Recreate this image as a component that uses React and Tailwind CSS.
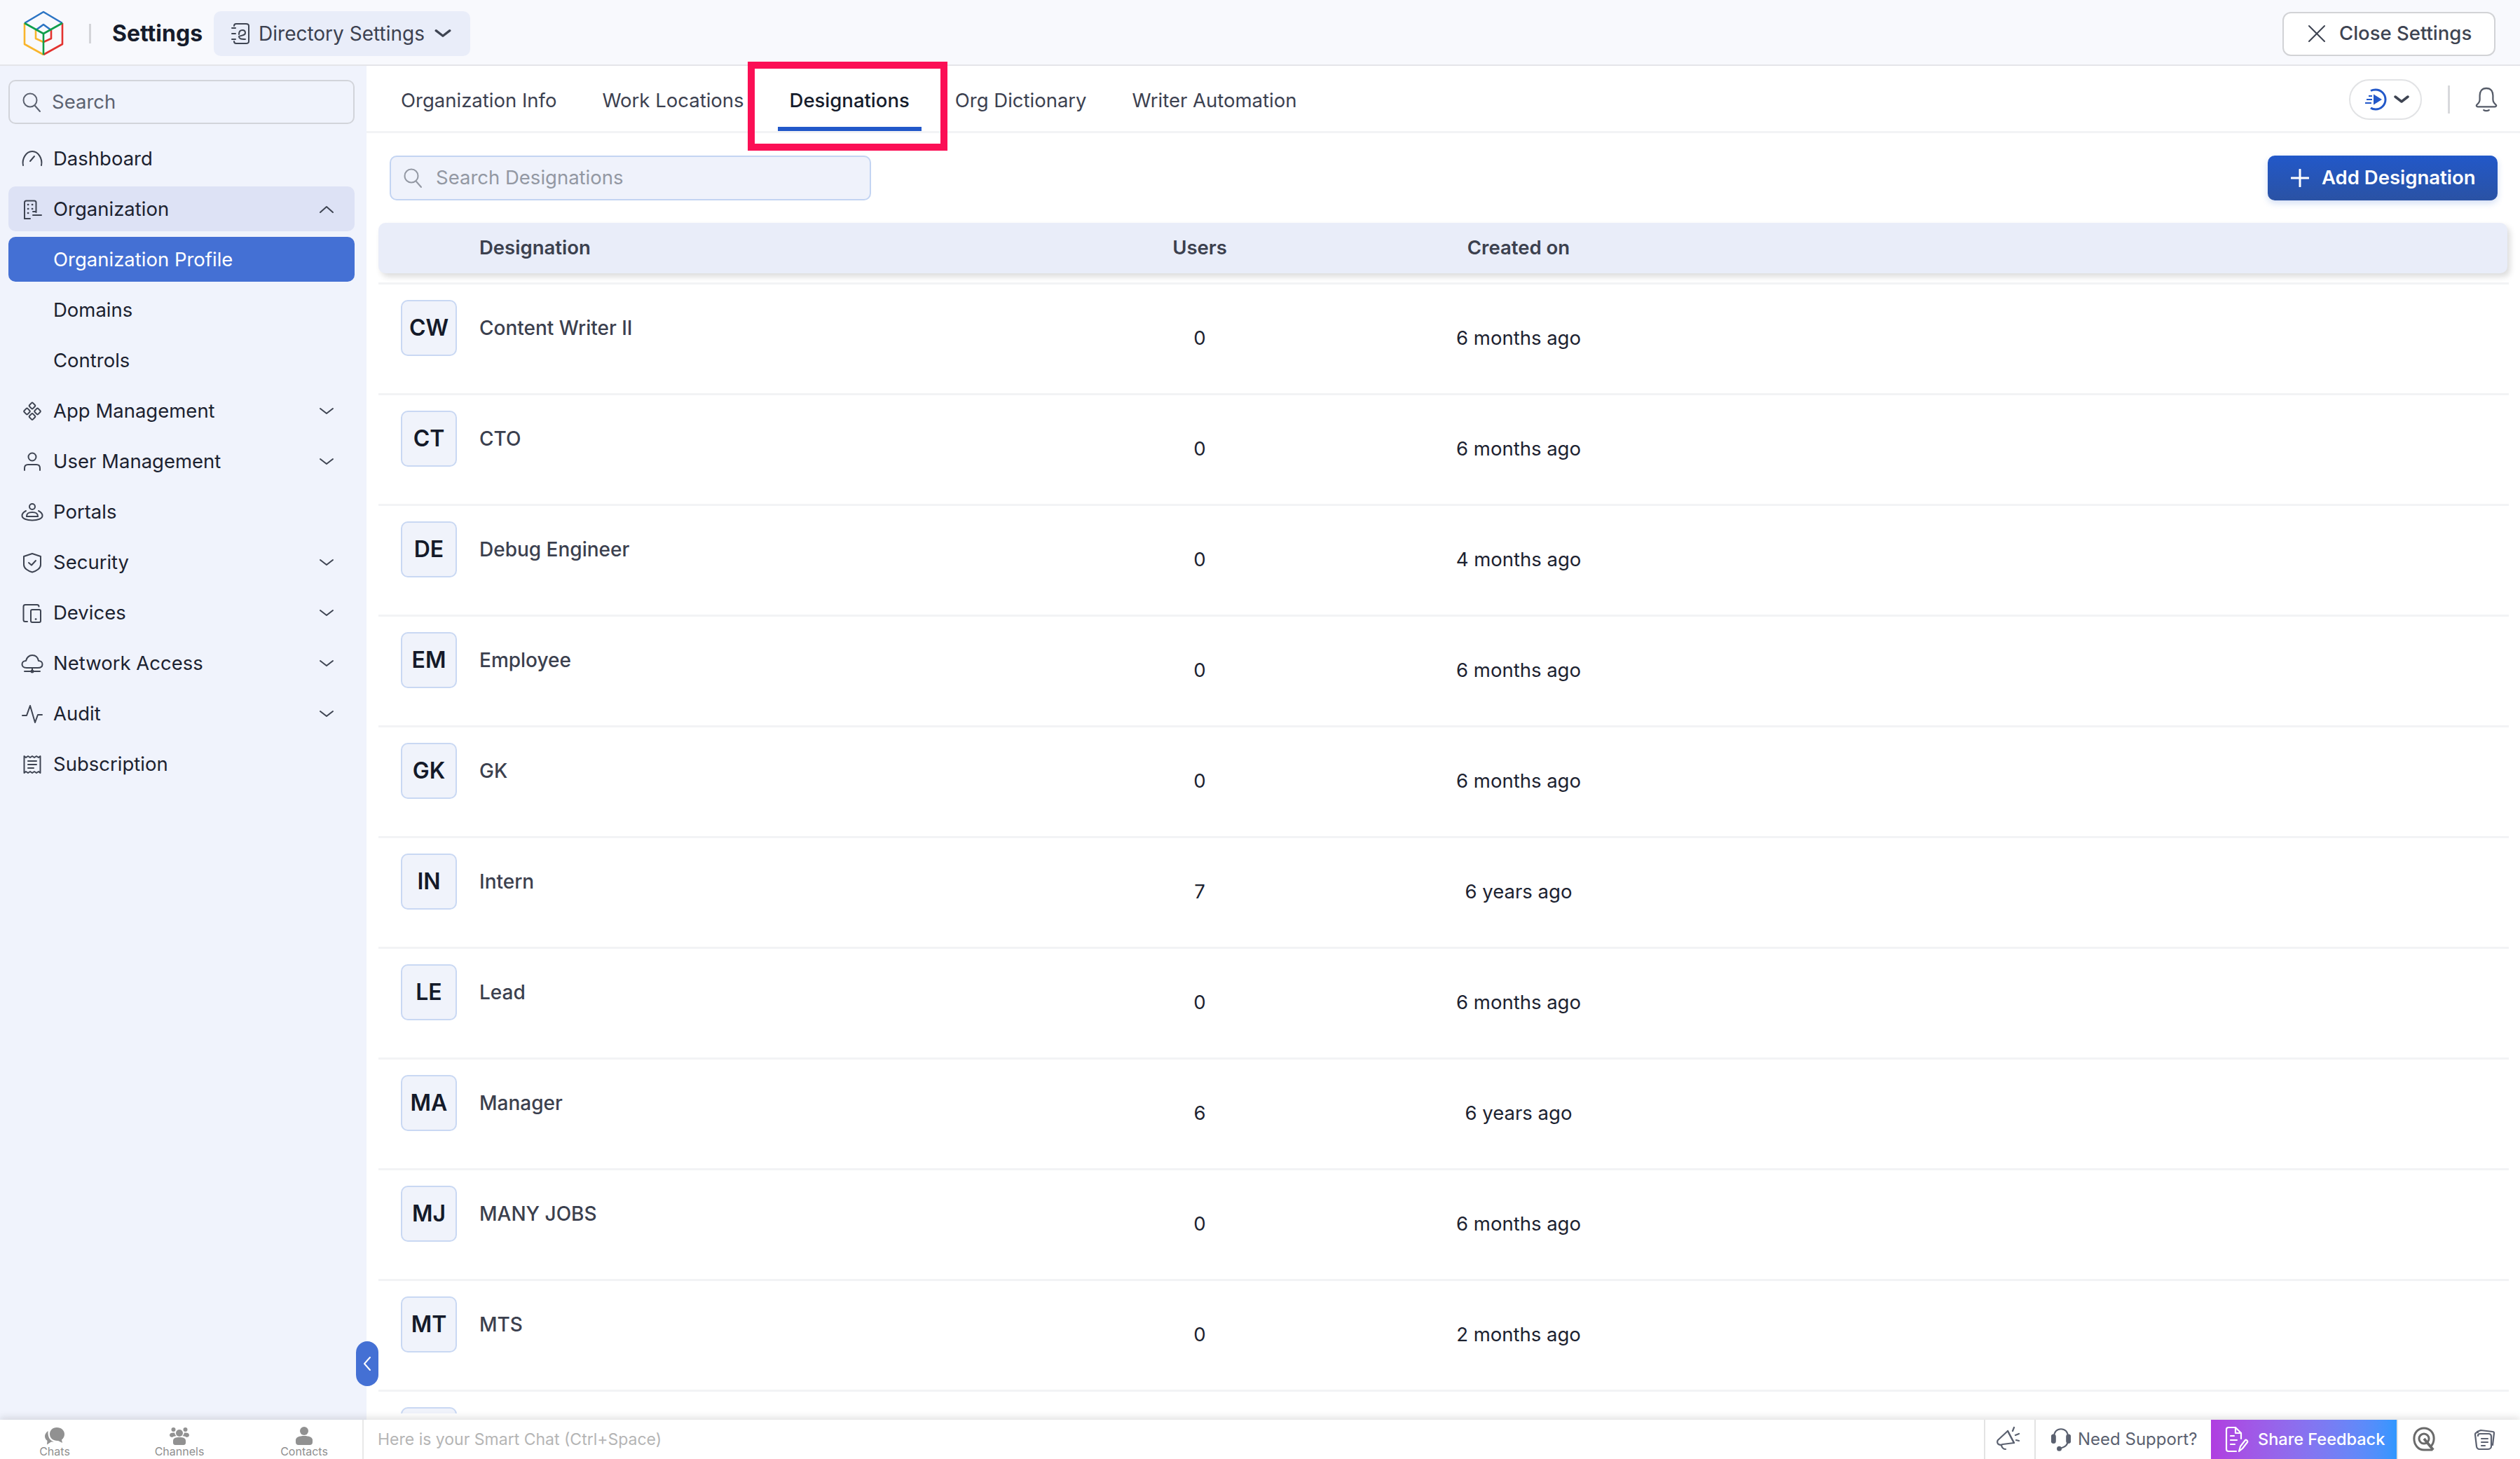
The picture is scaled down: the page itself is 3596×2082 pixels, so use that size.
import React from "react";

const Logo = () => (
  <svg viewBox="32 14 60 68" className="w-[60px] h-[68px]" fill="none" strokeWidth="2.6" strokeLinejoin="round">
    <path d="M35 33V63L62 78" stroke="#f9b52c" />
    <path d="M51 43V55L62 60" stroke="#f9b52c" />
    <path d="M89 33V63L62 78" stroke="#e3322f" />
    <path d="M73 43V55L62 60" stroke="#e3322f" />
    <path d="M35 33L62 17L89 33" stroke="#2b74c4" />
    <path d="M51 43L62 35L73 43" stroke="#2b74c4" />
    <path d="M35 33L62 48L89 33M62 48V78" stroke="#0e9e4a" />
  </svg>
);

const Stroke = ({ children, className = "w-[32px] h-[32px]", color = "#3e4452", sw = 2, box = "0 0 32 32" }) => (
  <svg viewBox={box} className={className} fill="none" stroke={color} strokeWidth={sw} strokeLinecap="round" strokeLinejoin="round">
    {children}
  </svg>
);

const SearchIcon = ({ color = "#5c6270" }) => (
  <Stroke color={color} className="w-[30px] h-[30px]" box="0 0 30 30">
    <circle cx="13" cy="12" r="9.5" />
    <path d="M20 20L27 28" />
  </Stroke>
);

const Chevron = ({ up, className = "w-[22px] h-[22px]", sw = 2 }) => (
  <Stroke className={className} box="0 0 22 22" sw={sw}>
    <path d={up ? "M2 15L11 7L20 15" : "M2 7L11 14L20 7"} />
  </Stroke>
);

const icons = {
  dashboard: (
    <>
      <path d="M3 25C1 16 7 5 16 5C25 5 31 16 29 25" />
      <path d="M13 19L19 12" />
    </>
  ),
  organization: (
    <>
      <path d="M5 29V6C5 4.5 6 3.5 7.5 3.5H19C20.5 3.5 21.5 4.5 21.5 6V20" />
      <path d="M5 29H13M17 24H29M17 19H21" />
      <path d="M10 9H10.2M16 9H16.2M10 15H10.2M16 15H16.2M10 21H10.2" strokeWidth="2.6" />
    </>
  ),
  app: (
    <>
      <rect x="12.5" y="4.5" width="7" height="7" rx="1.5" transform="rotate(45 16 8)" />
      <rect x="5" y="12.5" width="7" height="7" rx="1.5" transform="rotate(45 8.5 16)" />
      <rect x="20" y="12.5" width="7" height="7" rx="1.5" transform="rotate(45 23.5 16)" />
      <rect x="12.5" y="20" width="7" height="7" rx="1.5" transform="rotate(45 16 23.5)" />
    </>
  ),
  user: (
    <>
      <circle cx="16" cy="9" r="5.5" />
      <path d="M5 28V25C5 22 7 20 10 20H22C25 20 27 22 27 25V28" />
    </>
  ),
  portals: (
    <>
      <circle cx="16" cy="8" r="4" />
      <path d="M8 22C8 17 11 16 16 16C21 16 24 17 24 22" />
      <path d="M7 14C3 16 1.5 18 1.5 21C1.5 25 8 27.5 16 27.5C24 27.5 30.5 25 30.5 21C30.5 18 29 16 25 14" />
      <path d="M8 22H24" />
    </>
  ),
  security: (
    <>
      <path d="M16 3L28 7V19C28 24 22 28 16 29.5C10 28 4 24 4 19V7L16 3Z" />
      <path d="M11 16L15 19.5L21 13" />
    </>
  ),
  devices: (
    <>
      <path d="M9 28H6C4.5 28 3.5 27 3.5 25.5V6.5C3.5 5 4.5 4 6 4H23C24.5 4 25.5 5 25.5 6.5" />
      <rect x="14" y="11" width="14" height="18" rx="2" />
      <path d="M21 24.5H21.2" strokeWidth="2.6" />
    </>
  ),
  network: (
    <>
      <path d="M8 22C3 22 1.5 19 1.5 17C1.5 14 4 12 7 12C8 7 12 4 16 4C21 4 24 7 25 12C28 12 30.5 14 30.5 17C30.5 20 28 22 24 22H8Z" />
      <path d="M16 22V27M5 27H27" />
      <circle cx="16" cy="27" r="1.5" />
    </>
  ),
  audit: <path d="M2 18H8L13 4L20 28L24 17H30" />,
  subscription: (
    <>
      <path d="M4.5 4L7 6L10 4L13 6L16 4L19 6L22 4L25 6L27.5 4V28L25 26L22 28L19 26L16 28L13 26L10 28L7 26L4.5 28V4Z" />
      <path d="M10 11H22M10 16H22M10 21H18" />
    </>
  ),
};

const navItems = [
  { label: "Dashboard", icon: "dashboard" },
  { label: "Organization", icon: "organization", open: true, active: true },
  { label: "Organization Profile", selected: true },
  { label: "Domains" },
  { label: "Controls" },
  { label: "App Management", icon: "app", arrow: true },
  { label: "User Management", icon: "user", arrow: true },
  { label: "Portals", icon: "portals" },
  { label: "Security", icon: "security", arrow: true },
  { label: "Devices", icon: "devices", arrow: true },
  { label: "Network Access", icon: "network", arrow: true },
  { label: "Audit", icon: "audit", arrow: true },
  { label: "Subscription", icon: "subscription" },
];

const NavRow = ({ item }) => {
  let rowClass = "text-[#1c2230]";
  if (item.active) rowClass = "bg-[#dde2f5] text-[#1c2230]";
  if (item.selected) rowClass = "bg-[#4470d4] text-white";

  return (
    <div className={`h-[64px] rounded-[10px] flex items-center pl-[18px] pr-[29px] pt-[1px] text-[27.5px] ${rowClass}`}>
      <div className="w-[32px] h-[32px] shrink-0">{item.icon && <Stroke>{icons[item.icon]}</Stroke>}</div>
      <span className="ml-[14px]">{item.label}</span>
      {(item.arrow || item.open) && (
        <div className="ml-auto">
          <Chevron up={item.open} />
        </div>
      )}
    </div>
  );
};

const tabs = ["Organization Info", "Work Locations", "Designations", "Org Dictionary", "Writer Automation"];

const rows = [
  { short: "CW", name: "Content Writer II", users: 0, created: "6 months ago" },
  { short: "CT", name: "CTO", users: 0, created: "6 months ago" },
  { short: "DE", name: "Debug Engineer", users: 0, created: "4 months ago" },
  { short: "EM", name: "Employee", users: 0, created: "6 months ago" },
  { short: "GK", name: "GK", users: 0, created: "6 months ago" },
  { short: "IN", name: "Intern", users: 7, created: "6 years ago" },
  { short: "LE", name: "Lead", users: 0, created: "6 months ago" },
  { short: "MA", name: "Manager", users: 6, created: "6 years ago" },
  { short: "MJ", name: "MANY JOBS", users: 0, created: "6 months ago" },
  { short: "MT", name: "MTS", users: 0, created: "2 months ago" },
  { short: "", name: "", users: "", created: "" }, // cut off by the bottom bar
];

const Row = ({ row }) => (
  <div className="h-[158px] shrink-0 border-t-[3px] border-[#f2f3f5] flex items-center pb-[1px]">
    <div className="w-[1022px] self-start flex items-center pl-[32px] pt-[22px]">
      <div className="w-[80px] h-[80px] rounded-[10px] border-2 border-[#c9d8f3] bg-[#f0f3fb] flex items-center justify-center text-[32px] font-semibold text-[#141a29]">
        {row.short}
      </div>
      <span className="ml-[32px] text-[28px] font-medium text-[#3b404e]">{row.name}</span>
    </div>
    <div className="w-[300px] text-center text-[27.5px] text-[#1c2230]">{row.users}</div>
    <div className="w-[610px] text-center text-[27.5px] text-[#1c2230]">{row.created}</div>
  </div>
);

const ChatsIcon = () => (
  <svg viewBox="0 0 30 26" className="w-[30px] h-[26px]" fill="#919191">
    <path d="M18 1C24.5 1 29 5.2 29 10.5C29 14 27.5 16.5 25 18.5L26 23L20 20C13.5 20.5 8 16.5 8 10.5C8 5.2 12 1 18 1Z" />
    <path d="M5.5 6C3 8 1 10.5 1 13.5C1 16.5 2.5 18.5 4.5 20L4 25.5L10 21.5L14 21.5C9 20 5 16 5.5 6Z" />
  </svg>
);

const ChannelsIcon = () => (
  <svg viewBox="0 0 28 26" className="w-[28px] h-[26px]" fill="#919191">
    <circle cx="14" cy="9" r="5" />
    <circle cx="5.5" cy="4" r="3" />
    <circle cx="22.5" cy="4" r="3" />
    <path d="M0 12C0 9 3 8 7 8.5C7.5 11 8.5 12 9.5 13C7 13.5 5 14 4 15C2 15 0 14 0 12Z" />
    <path d="M28 12C28 9 25 8 21 8.5C20.5 11 19.5 12 18.5 13C21 13.5 23 14 24 15C26 15 28 14 28 12Z" />
    <path d="M5 20C5 16 9 15 14 15C19 15 23 16 23 20V23C23 25 21.5 26 20 26H8C6.5 26 5 25 5 23V20Z" />
  </svg>
);

const ContactsIcon = () => (
  <svg viewBox="0 0 24 26" className="w-[24px] h-[26px]" fill="#919191">
    <circle cx="12" cy="6" r="6" />
    <path d="M0 19C0 15 5 13 12 13C19 13 24 15 24 19V22C24 24.5 22.5 26 20 26H4C1.5 26 0 24.5 0 22V19Z" />
  </svg>
);

export default function App() {
  return (
    <div className="relative w-[3596px] h-[2082px] overflow-hidden flex flex-col bg-white font-[Inter,sans-serif]">
      {/* top bar */}
      <div className="h-[94px] shrink-0 bg-[#f8f9fd] border-b-2 border-[#e4e5e9] flex items-center pl-[32px] pr-[35px] pt-[4px]">
        <Logo />
        <div className="w-[3px] h-[28px] ml-[35px] bg-[#d4d5d9]" />
        <span className="ml-[30px] text-[32px] font-bold text-[#161c2b]">Settings</span>
        <div className="ml-[16px] w-[366px] h-[64px] rounded-[10px] bg-[#e9edf9] flex items-center pl-[24px] text-[28px] text-[#3c4150]">
          <Stroke className="w-[28px] h-[32px]" box="0 0 28 32">
            <path d="M5 5C5 3 6 2 8 2H22C24 2 26 3 26 5V27C26 29 24 30 22 30H8C6 30 5 29 5 27" />
            <path d="M2 8H7M2 16H7M2 24H7" />
            <path d="M12 17C12 13 14 11 17 11C20 11 21 13 21 15C21 18 18 18 12 20C12 23 14 24 21 24" />
          </Stroke>
          <span className="ml-[12px]">Directory Settings</span>
          <div className="ml-[14px]">
            <Chevron className="w-[24px] h-[24px]" sw={3} />
          </div>
        </div>
        <div className="ml-auto w-[304px] h-[63px] rounded-[12px] bg-white border-2 border-[#d2d3d6] flex items-center pl-[34px] text-[27.5px] font-medium text-[#3e4452]">
          <Stroke className="w-[26px] h-[26px]" box="0 0 26 26">
            <path d="M2 2L24 24M24 2L2 24" />
          </Stroke>
          <span className="ml-[19px]">Close Settings</span>
        </div>
      </div>

      <div className="flex-1 flex min-h-0">
        {/* sidebar */}
        <div className="w-[523px] shrink-0 bg-[#f0f3fc] pl-[12px] pr-[17px] pt-[20px]">
          <div className="h-[63px] rounded-[10px] border-2 border-[#d2d4da] flex items-center pl-[16px] text-[27.5px] text-[#5c6270]">
            <SearchIcon />
            <span className="ml-[14px]">Search</span>
          </div>
          <div className="mt-[17px] flex flex-col gap-[8px]">
            {navItems.map((item) => (
              <NavRow key={item.label} item={item} />
            ))}
          </div>
        </div>

        {/* main */}
        <div className="flex-1 min-w-0 flex flex-col pb-[9px]">
          <div className="h-[96px] shrink-0 border-b-[3px] border-[#f2f3f5] flex items-center pl-[49px] pr-[32px] text-[27.5px] text-[#3c4150]">
            <div className="flex gap-[65px] pt-[6px]">
              {tabs.map((tab) =>
                tab === "Designations" ? (
                  <div key={tab} className="relative font-medium text-[#161c2b]">
                    {tab}
                    <div className="absolute -left-[17px] -right-[17px] top-[58px] h-[6px] bg-[#2258c9]" />
                  </div>
                ) : (
                  <div key={tab}>{tab}</div>
                )
              )}
            </div>
            <div className="ml-auto flex items-center pt-[2px]">
              <div className="w-[104px] h-[58px] rounded-full border-2 border-[#e2e3e5] flex items-center pl-[20px]">
                <svg viewBox="0 0 32 32" className="w-[32px] h-[32px]" fill="none" stroke="#2258c9" strokeWidth="3">
                  <path d="M9 3.5C11 2.5 13.5 2 16 2C23.5 2 30 8 30 16C30 24 23.5 30 16 30C13.5 30 11 29.5 9 28" />
                  <path d="M13 8.5L25 16L13 23.5Z" fill="#2258c9" stroke="none" />
                  <path d="M6 11H11M3 16H11M1 21H10" strokeWidth="2" />
                </svg>
                <div className="ml-[10px]">
                  <Chevron sw={3.5} />
                </div>
              </div>
              <div className="ml-[37px] w-[3px] h-[40px] bg-[#d8d9dc]" />
              <div className="ml-[36px] flex">
                <Stroke className="w-[32px] h-[38px]" box="0 0 34 38" color="#555b68" sw={2.4}>
                  <path d="M17 2C10 2 7 7 7 13V19C7 23 5 25 2.5 27C1.5 28 2 30 4 30H30C32 30 32.5 28 31.5 27C29 25 27 23 27 19V13C27 7 24 2 17 2Z" />
                  <path d="M13 35C15 36.5 19 36.5 21 35" />
                </Stroke>
              </div>
            </div>
          </div>

          <div className="shrink-0 mt-[32px] pl-[33px] pr-[32px] flex justify-between">
            <div className="w-[687px] h-[64px] rounded-[10px] border-2 border-[#c3d4f2] bg-[#eff2fb] flex items-center pl-[16px] text-[27.5px] text-[#9398a3]">
              <SearchIcon color="#9398a3" />
              <span className="ml-[18px]">Search Designations</span>
            </div>
            <div className="w-[328px] h-[64px] rounded-[10px] bg-gradient-to-b from-[#2258c9] to-[#2a52a4] shadow-[0_4px_10px_rgba(34,88,201,0.2)] flex items-center pl-[33px] text-[27.5px] font-semibold text-white">
              <Stroke className="w-[26px] h-[26px]" box="0 0 26 26" color="#ffffff" sw={3}>
                <path d="M13 1V25M1 13H25" />
              </Stroke>
              <span className="ml-[18px]">Add Designation</span>
            </div>
          </div>

          <div className="shrink-0 mt-[32px] ml-[17px] mr-[18px] h-[72px] rounded-[10px] bg-[#e9edf9] shadow-[4px_5px_8px_rgba(0,0,0,0.14)] flex items-center text-[27.5px] font-semibold text-[#3b404e]">
            <div className="w-[1022px] pl-[144px]">Designation</div>
            <div className="w-[300px] text-center">Users</div>
            <div className="w-[610px] text-center">Created on</div>
          </div>

          <div className="flex-1 min-h-0 overflow-hidden mt-[13px] ml-[17px] mr-[16px] flex flex-col">
            {rows.map((row, i) => (
              <Row key={i} row={row} />
            ))}
          </div>
        </div>
      </div>

      {/* bottom bar */}
      <div className="h-[56px] shrink-0 bg-white shadow-[0_-3px_10px_rgba(0,0,0,0.12)] z-10 flex items-stretch">
        <div className="w-[519px] shrink-0 border-r-2 border-[#e8e8e8] flex pl-[30px] gap-[82px] text-[16px] leading-[18px] text-[#8f8f8f]">
          {[
            ["Chats", <ChatsIcon />],
            ["Channels", <ChannelsIcon />],
            ["Contacts", <ContactsIcon />],
          ].map(([label, icon]) => (
            <div key={label} className="w-[96px] pt-[10px] flex flex-col items-center">
              {icon}
              <span>{label}</span>
            </div>
          ))}
        </div>
        <div className="flex-1 flex items-center pl-[20px] text-[23px] text-[#b5b5b5]">Here is your Smart Chat (Ctrl+Space)</div>
        <div className="w-[74px] border-x-2 border-[#e3e3e3] flex items-center justify-center pr-[6px]">
          <Stroke className="w-[34px] h-[38px]" box="0 0 34 38" color="#5b6170" sw={2.2}>
            <path d="M17 7L3 20C1.5 22 2 25 4 26C6 27.5 8 27 10 26L26 24Z" />
            <path d="M17 7L26 24" />
            <path d="M8 28C9 31 11 33 14 33" />
            <path d="M24 7L26 2M28 13L33 11M29 20L33 21" />
          </Stroke>
        </div>
        <div className="w-[250px] flex items-center pl-[22px] text-[24px] text-[#5b6170]">
          <svg viewBox="0 0 34 40" className="w-[28px] h-[36px]" fill="none" stroke="#5b6170" strokeWidth="2.5">
            <path d="M5 15C5 7 10 2 17 2C24 2 29 7 29 15V22C29 30 24 33 15 36" />
            <rect x="1" y="12" width="6" height="14" rx="3" fill="#5b6170" />
            <rect x="27" y="12" width="6" height="14" rx="3" fill="#5b6170" />
            <circle cx="14" cy="36" r="3" fill="#5b6170" />
          </svg>
          <span className="ml-[10px]">Need Support?</span>
        </div>
        <div className="w-[265px] bg-gradient-to-r from-[#b03de0] to-[#2f97ff] flex items-center pl-[20px] text-[23.5px] font-medium text-white">
          <Stroke className="w-[34px] h-[38px]" box="0 0 34 38" color="#ffffff" sw={2.2}>
            <path d="M16 36H5C3 36 2 35 2 33V5C2 3 3 2 5 2H15L23 10V18" />
            <path d="M15 2V10H23" />
            <path d="M8 14H13M8 20H17M8 26H14" />
            <path d="M20 36L22 29L29 20C30 19 33 21 32 23L25 32Z" />
          </Stroke>
          <span className="ml-[13px]">Share Feedback</span>
        </div>
        <div className="w-[176px] border-l-2 border-[#e3e3e3] flex items-center pl-[21px]">
          <svg viewBox="0 0 34 38" className="w-[32px] h-[36px]" fill="none" stroke="#6a6a6a" strokeWidth="3.2">
            <path d="M30 35H17C8 35 2 27 2 18C2 9 8 2 17 2C26 2 32 9 32 18C32 24 30 27 27 30" />
            <circle cx="17" cy="18" r="7.5" />
            <path d="M17 18L31 35" strokeWidth="4" />
          </svg>
          <div className="ml-[55px]">
            <Stroke className="w-[30px] h-[32px]" box="0 0 30 32" color="#5b6170" sw={2.2}>
              <path d="M5 5L10 3L27 5C28 5 29 6 29 7L27 24" />
              <path d="M6 6C3 6 2 7 2 9L4 26C4 28 6 30 8 30H20C23 30 25 28 25 26V12C25 9 23 8 21 8H9C7 8 6 9 6 11" />
              <path d="M11 15H20M11 20H20M11 25H16" />
            </Stroke>
          </div>
        </div>
      </div>

      {/* sidebar collapse handle */}
      <div className="absolute left-[508px] top-[1914px] w-[32px] h-[64px] rounded-full bg-[#4470d4] flex items-center justify-center z-20">
        <Stroke className="w-[12px] h-[22px]" box="0 0 12 22" color="#ffffff" sw={2}>
          <path d="M10 2L2 11L10 20" />
        </Stroke>
      </div>

      {/* red highlight drawn on the screenshot */}
      <div className="absolute left-[1067px] top-[88px] w-[285px] h-[127px] border-[10px] border-[#fb0f55] z-20" />
    </div>
  );
}
